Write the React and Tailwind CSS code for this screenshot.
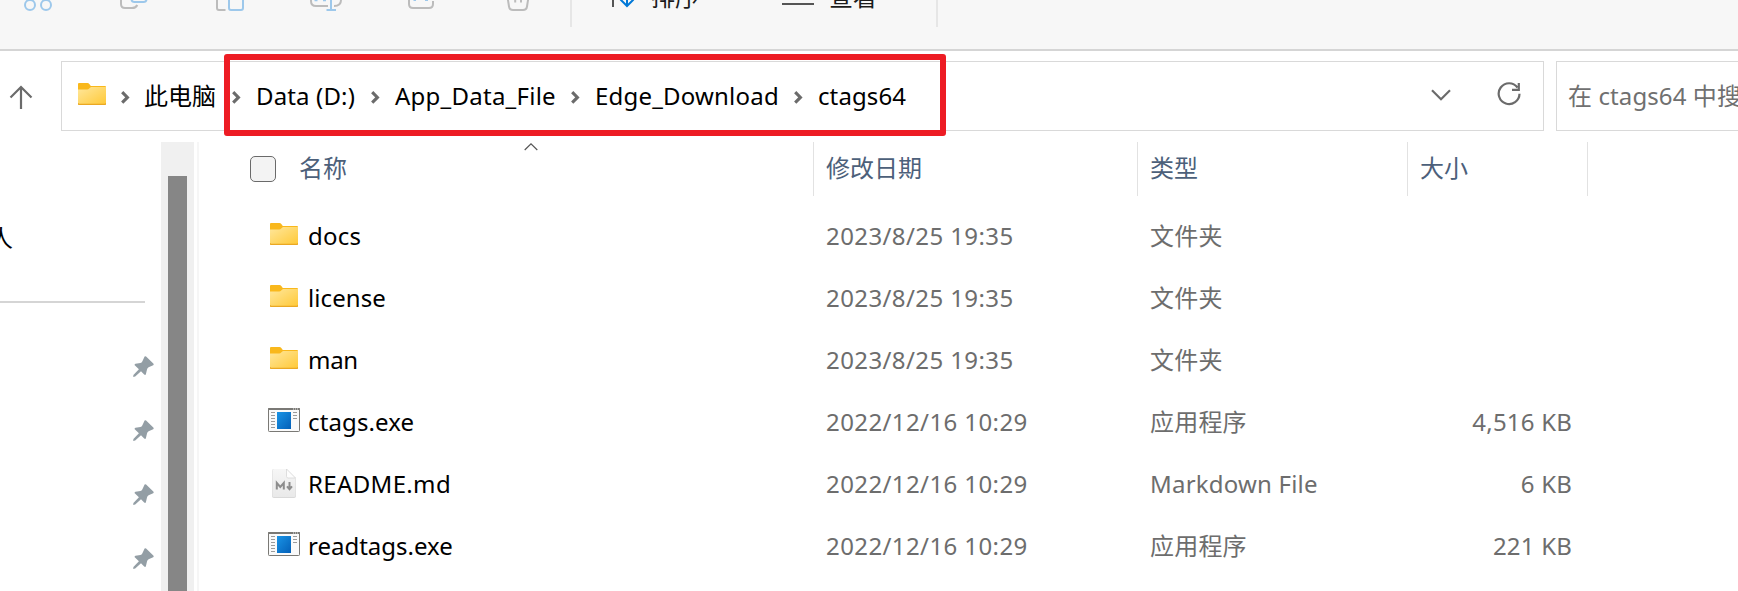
const crumbs = [
  { label: "此电脑", cls: "w-[72px] -ml-px mr-px" },
  { label: "Data (D:)", cls: "w-[100px] tracking-[0.15px]" },
  { label: "App_Data_File", cls: "w-[161px] tracking-[0.25px]" },
  { label: "Edge_Download", cls: "w-[184px] tracking-[0.2px]" },
  { label: "ctags64", cls: "w-[90px] tracking-[0.1px]" },
];

const files = [
  { name: "docs", cls: "tracking-[0.25px]", date: "2023/8/25 19:35", type: "文件夹", size: "", kind: "folder" },
  { name: "license", cls: "tracking-[0.1px]", date: "2023/8/25 19:35", type: "文件夹", size: "", kind: "folder" },
  { name: "man", cls: "tracking-[-0.3px]", date: "2023/8/25 19:35", type: "文件夹", size: "", kind: "folder" },
  { name: "ctags.exe", cls: "tracking-[0.12px]", date: "2022/12/16 10:29", type: "应用程序", size: "4,516 KB", kind: "exe" },
  { name: "README.md", cls: "tracking-[0.35px]", date: "2022/12/16 10:29", type: "Markdown File", size: "6 KB", kind: "md" },
  { name: "readtags.exe", cls: "tracking-normal", date: "2022/12/16 10:29", type: "应用程序", size: "221 KB", kind: "exe" },
];

function FolderIcon() {
  return (
    <svg width="28" height="22" viewBox="0 0 28 22" className="block shrink-0">
      <defs>
        <linearGradient id="folder" x1="0" y1="0" x2="1" y2="1">
          <stop offset="0" stopColor="#ffe79c" />
          <stop offset="1" stopColor="#ffc937" />
        </linearGradient>
      </defs>
      <path d="M0 1 Q0 0 1 0 H9.5 Q10.6 0 11.3 1 L12.8 3 H27 Q28 3 28 4 V10 H0Z" fill="#f9b81c" />
      <path d="M0 6.5 H9.2 Q10.4 6.5 11.2 5.6 L12 4.7 Q12.6 4 13.4 4 H28 V20.6 Q28 21.6 27 21.6 H1 Q0 21.6 0 20.6Z" fill="url(#folder)" />
      <path d="M0 20 Q0.2 21.4 1.3 21.4 H26.7 Q27.8 21.4 28 20" fill="none" stroke="#eaa823" strokeWidth="1.1" />
    </svg>
  );
}

function ExeIcon() {
  return (
    <svg width="32" height="24" viewBox="0 0 32 24" className="block shrink-0">
      <defs>
        <linearGradient id="exe" x1="0" y1="0" x2="1" y2="1">
          <stop offset="0" stopColor="#1a94e6" />
          <stop offset="1" stopColor="#0460b8" />
        </linearGradient>
      </defs>
      <rect x="0.5" y="0.5" width="31" height="23" rx="0.8" fill="#fafafa" stroke="#7a7975" />
      <rect x="0" y="0" width="32" height="2" rx="0.8" fill="#7a7975" />
      <path d="M25 1h1M27 1h1M29 1h1" stroke="#e8e8e8" />
      <rect x="9" y="4" width="14" height="17" fill="url(#exe)" />
      <path d="M3 4.5h4M3 7.5h4M3 10.5h4M3 13.5h4M3 16.5h4M3 19.5h4M25 4.5h4M25 7.5h4M25 10.5h4" stroke="#9b9b9b" />
    </svg>
  );
}

function MarkdownIcon() {
  return (
    <svg width="26" height="31" viewBox="0 0 26 31" className="block shrink-0">
      <defs>
        <linearGradient id="md" x1="0" y1="0" x2="0" y2="1">
          <stop offset="0" stopColor="#f6f6f6" />
          <stop offset="1" stopColor="#e9e9e9" />
        </linearGradient>
      </defs>
      <path d="M1 3 Q1 1 3 1 H15.5 L25 10.5 V28 Q25 30 23 30 H3 Q1 30 1 28Z" fill="#d9d9d9" />
      <path d="M1.5 2.6 Q1.5 1 3.1 1 H15.5 L24.5 10 V27.4 Q24.5 29 22.9 29 H3.1 Q1.5 29 1.5 27.4Z" fill="url(#md)" />
      <path d="M15.5 1 L24.5 10 H17.1 Q15.5 10 15.5 8.4Z" fill="#fdfdfd" stroke="#d2d2d2" strokeWidth="0.7" />
      <path d="M5.8 21.6 V15 L9.3 19 L12.8 15 V21.6" fill="none" stroke="#8d8d8d" strokeWidth="2" />
      <path d="M18.5 14 V19.5 M16 18.4 L18.5 21.2 L21 18.4" fill="none" stroke="#8d8d8d" strokeWidth="2" />
    </svg>
  );
}

function PinIcon() {
  return (
    <svg width="21" height="21" viewBox="0 0 21 21" className="block">
      <path d="M11.6 0.5 Q12.3 -0.2 13.1 0.5 L20.3 7.4 Q21.2 8.4 20.2 9.2 L15.6 11.2 Q14.3 12 14 13.4 L12.9 18.3 Q12.3 19.6 11.2 18.6 L8 15.2 L2.2 20.6 L0.2 20.9 L0.4 19 L5.9 13.2 L2 9.6 Q1 8.4 2.4 7.8 L7.4 7 Q8.8 6.6 9.4 5.2Z" fill="#939ea5" />
    </svg>
  );
}

function CrumbChevron() {
  return (
    <svg width="9" height="13" viewBox="0 0 9 13" className="block shrink-0">
      <path d="M1.2 1.2 L6.4 6.4 L1.2 11.6" fill="none" stroke="#6b6b6b" strokeWidth="3.1" />
    </svg>
  );
}

function Toolbar() {
  return (
    <div className="flex h-[51px] w-full items-start border-b-2 border-[#d5d5d5] bg-[#f7f7f7] text-[#1b1b1b]">
      <svg width="28" height="12" viewBox="24 0 28 12" className="ml-[24px] block shrink-0" fill="none" stroke="#9dc8eb" strokeWidth="2">
        <circle cx="30" cy="5" r="5" />
        <circle cx="46" cy="5" r="5" />
      </svg>
      <svg width="28" height="12" viewBox="120 0 28 12" className="ml-[68px] block shrink-0" fill="none" strokeWidth="2">
        <path d="M121 -4 V4 Q121 8 125 8 H132 Q136 8 137.300 5" stroke="#bcbcbc" />
        <path d="M131.500 -4 V-1 Q131.500 2 134.500 2 H143.500 Q146.500 2 146.500 -1" stroke="#9dc8eb" />
      </svg>
      <svg width="30" height="12" viewBox="216 0 30 12" className="ml-[68px] block shrink-0" fill="none" strokeWidth="2">
        <path d="M217 -4 V8 Q217 10 219 10 H225.500" stroke="#bcbcbc" />
        <path d="M229 -4 V8 Q229 10 231 10 H241 Q243 10 243 8 V-4" stroke="#9dc8eb" />
      </svg>
      <svg width="34" height="12" viewBox="309 0 34 12" className="ml-[63px] block shrink-0" fill="none" strokeWidth="2">
        <path d="M311 -3 V1 Q311 6 316 6 H328 M334 6 Q341 6 341 0 V-3" stroke="#bcbcbc" />
        <path d="M314.500 0.300 H317.500 M323 0.300 H326 M331 -4 V10 M326.500 10 H336" stroke="#9dc8eb" />
      </svg>
      <svg width="28" height="12" viewBox="407 0 28 12" className="ml-[64px] block shrink-0" fill="none" strokeWidth="2">
        <path d="M409 -3 V4 Q409 8 413 8 H429 Q433 8 433 4 V1" stroke="#bcbcbc" />
        <path d="M413.500 0 H416 M425 0 H428" stroke="#9dc8eb" />
      </svg>
      <svg width="26" height="12" viewBox="506 0 26 12" className="ml-[71px] block shrink-0" fill="none" stroke="#bcbcbc" strokeWidth="2">
        <path d="M507.500 -3 L509 6.500 Q509.500 10 513 10 H523 Q526.500 10 527 6.500 L528.500 -3 M515.200 -3 V2.500 M521 -3 V2.500" />
      </svg>
      <div className="ml-[38px] h-[27px] w-[2px] shrink-0 bg-[#e6e6e6]" />
      <svg width="24" height="12" viewBox="612 0 24 12" className="ml-[40px] block shrink-0" fill="none" strokeWidth="2">
        <path d="M613 -3 V7" stroke="#555" />
        <path d="M627 -3 V6 M620.500 -0.500 L627 6 L633.500 -0.500" stroke="#0078d7" />
      </svg>
      <div className="ml-[15px] -mt-[17px] h-[28px] w-[50px] text-[24px] leading-[28px]">排序</div>
      <svg width="32" height="8" viewBox="782 0 32 8" className="ml-[81px] block shrink-0">
        <path d="M0 4 H820" stroke="#555" strokeWidth="2" />
      </svg>
      <div className="ml-[15px] -mt-[17px] h-[28px] w-[50px] text-[24px] leading-[28px]">查看</div>
      <div className="ml-[57px] h-[27px] w-[2px] shrink-0 bg-[#e6e6e6]" />
    </div>
  );
}

function AddressRow() {
  return (
    <div className="flex h-[91px] w-full pt-[10px]">
      <div className="flex h-[70px] w-[61px] shrink-0 items-start pl-[9px] pt-[24px]">
        <svg width="24" height="25" viewBox="0 0 24 25" fill="none" stroke="#6b6b6b" strokeWidth="2.200">
          <path d="M12 24 V2 M1.500 12.500 L12 2 L22.500 12.500" />
        </svg>
      </div>
      <div className="flex h-[70px] w-[1483px] shrink-0 items-center border border-[#d9d9d9] bg-white text-black">
        <div className="-mt-[4px] ml-[16px]">
          <FolderIcon />
        </div>
        {crumbs.map((c) => (
          <div key={c.label} className="flex items-center">
            <div className="ml-[15px] mt-[2px] w-[9px]">
              <CrumbChevron />
            </div>
            <div className="ml-[15px]">
              <div className={"whitespace-nowrap text-[24px] leading-[34px] " + c.cls}>{c.label}</div>
            </div>
          </div>
        ))}
        <div className="ml-auto flex items-center">
          <svg width="20" height="12" viewBox="0 0 20 12" className="-mt-[3px] mr-[46px]" fill="none" stroke="#6b6b6b" strokeWidth="2.200">
            <path d="M1 1.200 L10 10.200 L19 1.200" />
          </svg>
          <svg width="24" height="24" viewBox="0 0 24 24" className="-mt-[4px] mr-[22px]" fill="none" stroke="#6b6b6b" strokeWidth="2.200">
            <path d="M20.500 5.500 A10.400 10.400 0 1 0 22.500 11.800 M21.800 1 V7.800 H15" />
          </svg>
        </div>
      </div>
      <div className="ml-[12px] flex h-[70px] flex-1 items-center overflow-hidden border border-r-0 border-[#d9d9d9] bg-white pl-[11px]">
        <div className="whitespace-nowrap text-[24px] tracking-[0.1px] text-[#707070]">在 ctags64 中搜索</div>
      </div>
    </div>
  );
}

function Sidebar() {
  return (
    <div className="flex w-[161px] shrink-0 flex-col">
      <div className="mt-[78px] h-[36px] overflow-hidden text-[24px] leading-[36px] text-black">
        <div className="-ml-[11px]">人</div>
      </div>
      <div className="mt-[45px] h-[2px] w-[145px] bg-[#d5d5d5]" />
      <div className="ml-[133px] mt-[53px] flex flex-col gap-[43px]">
        <PinIcon />
        <PinIcon />
        <PinIcon />
        <PinIcon />
      </div>
    </div>
  );
}

function HeaderCell({ width, children }) {
  return (
    <div className={"flex shrink-0 items-center border-l border-[#e2e2e2] pb-[2px] pl-[12px] " + width}>{children}</div>
  );
}

function FileList() {
  return (
    <div className="flex flex-1 flex-col">
      <div className="flex h-[54px] text-[24px] text-[#4c607a]">
        <div className="flex w-[614px] shrink-0 items-center">
          <div className="ml-[51px] h-[26px] w-[26px] rounded-[5px] border-[1.500px] border-[#6a6a6a] bg-[#f3f3f3]" />
          <div className="ml-[23px] w-[225px] pb-[2px]">名称</div>
          <svg width="14" height="8" viewBox="0 0 14 8" className="mt-px self-start" fill="none" stroke="#555" strokeWidth="1.200">
            <path d="M0.700 7 L7 0.900 L13.300 7" />
          </svg>
        </div>
        <HeaderCell width="w-[324px]">修改日期</HeaderCell>
        <HeaderCell width="w-[270px]">类型</HeaderCell>
        <HeaderCell width="w-[180px]">大小</HeaderCell>
        <div className="w-px bg-[#e2e2e2]" />
      </div>
      <div className="flex flex-col pt-[9px]">
        {files.map((f) => (
          <div key={f.name} className="flex h-[62px] items-center whitespace-nowrap text-[24px] leading-[62px] text-[#6d6d6d]">
            <div className="ml-[64px] flex h-[62px] w-[42px] shrink-0 items-center justify-center">
              {f.kind === "folder" && <div className="-mt-[4px]"><FolderIcon /></div>}
              {f.kind === "exe" && <div className="-mt-[4px]"><ExeIcon /></div>}
              {f.kind === "md" && <div className="-mt-px"><MarkdownIcon /></div>}
            </div>
            <div className={"ml-[3px] w-[518px] shrink-0 text-black " + f.cls}>{f.name}</div>
            <div className="w-[324px] shrink-0 tracking-[0.4px]">{f.date}</div>
            <div className="w-[270px] shrink-0 tracking-[0.2px]">{f.type}</div>
            <div className="w-[152px] shrink-0 text-right tracking-[0.2px]">{f.size}</div>
          </div>
        ))}
      </div>
    </div>
  );
}

export default function App() {
  return (
    <div className="relative flex h-[591px] w-[1738px] flex-col overflow-hidden bg-white font-['Noto_Sans','Noto_Sans_CJK_SC',sans-serif]">
      <Toolbar />
      <AddressRow />
      <div className="flex h-[449px]">
        <Sidebar />
        <div className="w-[33px] shrink-0 bg-[#f0f0f0] pl-[7px] pt-[34px]">
          <div className="h-[415px] w-[19px] bg-[#868686]" />
        </div>
        <div className="ml-[3px] w-[2px] shrink-0 bg-[#f6f6f6]" />
        <FileList />
      </div>
      <div className="absolute left-[224px] top-[54px] h-[82px] w-[722px] rounded-[3px] border-[6px] border-[#ed1c24]" />
    </div>
  );
}
